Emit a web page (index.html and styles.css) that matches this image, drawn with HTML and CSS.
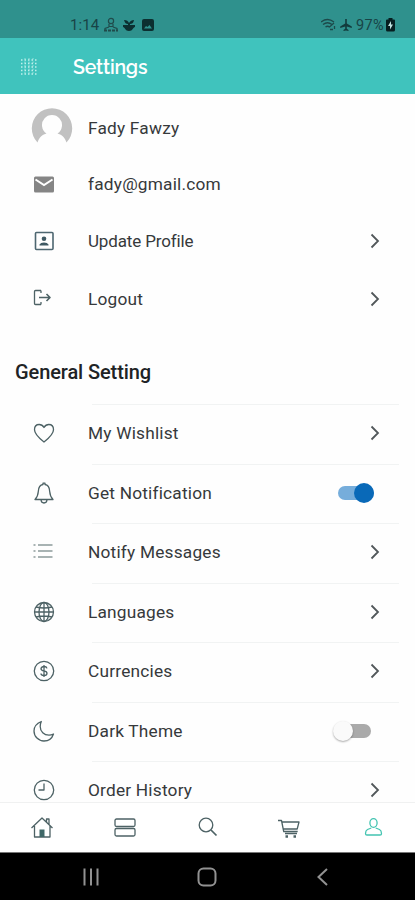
FILE: index.html
```html
<!DOCTYPE html>
<html lang="en">
<head>
<meta charset="utf-8">
<meta name="viewport" content="width=device-width, initial-scale=1">
<title>Settings</title>
<link rel="stylesheet" href="styles.css">
</head>
<body>
<div class="phone">
  <div class="status">
    <span class="time">1:14</span>
    <svg class="status-left" width="54" height="16" viewBox="0 0 54 16">
      <g fill="none" stroke="#204b4b" stroke-width="1.2"><circle cx="8" cy="4" r="2.6"/><path d="M6 7v2.500h4V7M2 13.500v-2l4-1.500M10 10l4 1.500v2"/><path d="M1 13.500h14" stroke-width="2" stroke-dasharray="3 1"/></g>
      <g fill="#0c2f30"><path d="M21 3c3 0 4 1 5 3 1-2 3-3 5-3-.5 3-2 4-4 4v1h5v2c-2 0-2 4-6 4s-4-4-6-4V8h5V7c-2 0-3-1-4-4z"/><path fill-rule="evenodd" d="M41 2h8q2 0 2 2v8q0 2-2 2h-8q-2 0-2-2V4q0-2 2-2zm0 9.500h8L46.500 8l-2 2-1.500-1z"/></g>
    </svg>
    <span class="grow"></span>
    <svg width="34" height="16" viewBox="0 0 34 16">
      <g fill="none" stroke="#1d494a" stroke-width="1.300"><path d="M0 5q6.500-5 13 0M2 7.500q4.500-3.500 9 0M4.500 10q2-1.500 4 0L13 6"/><path d="M9 12.500h3M13.500 9v3"/></g>
      <path fill="#123b3c" d="M24.200 2h1.600v4.500l5 3v1.500l-5-1.500v2.300l1.700 1.300v1l-2.500-.6-2.500.6v-1l1.700-1.300V9.500l-5 1.500V9.500l5-3z"/>
    </svg>
    <span class="percent">97%</span>
    <svg class="battery" width="9" height="14" viewBox="0 0 9 14"><path fill="#061e20" d="M2.500 0h4v1.500H8q1 0 1 1V12q0 1.500-1.500 1.500h-6Q0 13.500 0 12V2.500q0-1 1-1h1.500z"/><path fill="#bfe0de" d="M5 3 2 8h2v3.500L7 6.500H5z"/></svg>
  </div>
  <header class="appbar">
    <svg width="18" height="20" viewBox="0 0 18 20" fill="none" stroke="#e9fffc" stroke-width="1.700" stroke-dasharray="1.500 2"><path d="M1 3h16M1 6.500h16M1 10h16M1 13.500h16M1 17h16" opacity=".75"/><path d="M5 1v17M9 1v17M13 1v17" stroke-width="1" opacity=".5"/></svg>
    <h1>Settings</h1>
  </header>
  <main class="content">
    <section class="account">
      <div class="row avatar-row"><svg class="icon" width="42" height="42" viewBox="0 0 42 42"><path fill="#c1c1c1" d="M6.500 35.500A20.200 20.200 0 1 1 35.500 35.500C34 30 30 27.300 26.500 26.400A10 10 0 1 0 15.500 26.400C12 27.300 8 30 6.500 35.500z"/></svg><span>Fady Fawzy</span></div>
      <div class="row"><svg class="icon" width="24" height="24" viewBox="0 0 24 24"><rect x="2" y="4.500" width="20" height="16" rx="1.500" fill="#858585"/><path d="M3.500 7.500 12 13l8.500-5.500" fill="none" stroke="#fff" stroke-width="2"/></svg><span>fady@gmail.com</span></div>
      <div class="row"><svg class="icon" width="24" height="24" viewBox="0 0 24 24"><rect x="3.500" y="3.500" width="17.500" height="17" rx="1" fill="none" stroke="#4d6670" stroke-width="1.600"/><circle cx="12" cy="9.800" r="2.300" fill="#3f5963"/><path d="M7.500 16.500v-1q1-2 4.500-2t4.500 2v1z" fill="#3f5963"/></svg><span class="tight">Update Profile</span><svg class="chevron" viewBox="0 0 10 16"><path d="m1.500 1.500 6.500 6.500-6.500 6.500"/></svg></div>
      <div class="row"><svg class="icon line" width="24" height="24" viewBox="0 0 24 24"><path d="M9 3.500H3.500q-1 0-1 1v12q0 1 1 1H9M9 6v-2.500M9 15v2.500"/><path d="M7 10.500h10.500M14.500 7l3.500 3.500-3.500 3.500" stroke-width="1.600"/></svg><span>Logout</span><svg class="chevron" viewBox="0 0 10 16"><path d="m1.500 1.500 6.500 6.500-6.500 6.500"/></svg></div>
    </section>
    <h2>General Setting</h2>
    <section class="general">
      <div class="row"><svg class="icon line" width="24" height="24" viewBox="0 0 24 24"><path d="M12 21C7 17 2.500 13 2.500 8.700 2.500 5.500 4.500 3.500 7.200 3.500c2.100 0 3.700 1.100 4.800 3 1.100-1.900 2.700-3 4.800-3 2.700 0 4.700 2 4.700 5.200C21.500 13 17 17 12 21z"/></svg><span>My Wishlist</span><svg class="chevron" viewBox="0 0 10 16"><path d="m1.500 1.500 6.500 6.500-6.500 6.500"/></svg></div>
      <div class="row"><svg class="icon line" width="24" height="24" viewBox="0 0 24 24"><path d="M3 18.500c2-2 3-3.500 3.300-8C6.500 6.500 8 3.800 11 3.500V2.200h2v1.300c3 .3 4.500 3 4.700 7 .3 4.500 1.300 6 3.300 8zM9 19q.3 3 3 3t3-3"/></svg><span>Get Notification</span><i class="toggle on"></i></div>
      <div class="row"><svg class="icon line list" width="24" height="24" viewBox="0 0 24 24"><path d="M1.500 5h2M1.500 11h2M1.500 17h2M6 5h14.500M6 11h14.500M6 17h14.500"/></svg><span>Notify Messages</span><svg class="chevron" viewBox="0 0 10 16"><path d="m1.500 1.500 6.500 6.500-6.500 6.500"/></svg></div>
      <div class="row"><svg class="icon line" width="24" height="24" viewBox="0 0 24 24"><circle cx="12" cy="12" r="9.500"/><ellipse cx="12" cy="12" rx="5" ry="9.500"/><path d="M12 2.500v19M2.500 12h19M4 7q8 2 16 0M4 17q8-2 16 0"/></svg><span>Languages</span><svg class="chevron" viewBox="0 0 10 16"><path d="m1.500 1.500 6.500 6.500-6.500 6.500"/></svg></div>
      <div class="row"><svg class="icon line" width="24" height="24" viewBox="0 0 24 24"><circle cx="12" cy="12" r="9.700"/><path d="M15 9.300Q14.500 7.500 12 7.500T9 9.700q0 1.700 3 2.200t3 2.400q0 2.200-3 2.200t-3-2M12 6v12"/></svg><span>Currencies</span><svg class="chevron" viewBox="0 0 10 16"><path d="m1.500 1.500 6.500 6.500-6.500 6.500"/></svg></div>
      <div class="row"><svg class="icon line" width="24" height="24" viewBox="0 0 24 24"><path d="M9.300 2.500C4.500 4.500 2 8 2 12c0 5.500 4.500 10 10 10 4 0 8-2.500 9.500-7-2 1-3 1.100-4.500 1.100-5 0-8.800-3.600-8.800-8.600 0-2 .3-3.200 1.100-5z"/></svg><span>Dark Theme</span><i class="toggle off"></i></div>
      <div class="row"><svg class="icon line" width="24" height="24" viewBox="0 0 24 24"><circle cx="12" cy="12" r="9.700"/><path d="M12 5.500V12H6.500"/></svg><span>Order History</span><svg class="chevron" viewBox="0 0 10 16"><path d="m1.500 1.500 6.500 6.500-6.500 6.500"/></svg></div>
    </section>
  </main>
  <nav class="tabs">
    <svg class="line" width="24" height="24" viewBox="0 0 24 24"><path d="M1.500 12 12 2l10.500 10M4.500 10v11h15.500V10M16.500 6V3h2.500v5.300"/><path d="M9.500 13.500h5V21h-5z" fill="#3f6868" stroke="none"/></svg>
    <svg class="line" width="24" height="24" viewBox="0 0 24 24"><rect x="2" y="3" width="20" height="7.500" rx="1.500"/><rect x="2" y="12.500" width="20" height="7.500" rx="1.500"/></svg>
    <svg class="line" width="24" height="24" viewBox="0 0 24 24"><circle cx="10" cy="9" r="6.800"/><path d="m15 14 5.500 5.500" stroke-width="1.700"/></svg>
    <svg class="line" width="28" height="24" viewBox="0 0 28 24"><path d="M1 4.500h3.500l2.200 11h14M5 6h17l-1.800 7H6.500M8 17.500h12"/><path d="M8.500 20.500H11M16.500 20.500H19" stroke-width="2.300"/></svg>
    <svg class="line active" width="24" height="24" viewBox="0 0 24 24"><ellipse cx="11.500" cy="7" rx="3.600" ry="4.300"/><path d="M9.300 12 5.500 13.500q-2 1-2 4.200 0 1.300 1.500 1.300h13q1.500 0 1.500-1.300 0-3.200-2-4.200L13.700 12"/></svg>
  </nav>
  <div class="system">
    <svg width="20" height="20" viewBox="0 0 20 20"><path d="M3.500 1.500v17M10 1.500v17M16.500 1.500v17"/></svg>
    <svg width="20" height="20" viewBox="0 0 20 20"><rect x="1.500" y="1.500" width="17" height="17" rx="5"/></svg>
    <svg width="20" height="20" viewBox="0 0 20 20"><path d="m14 2-8.500 8 8.500 8"/></svg>
  </div>
</div>
</body>
</html>
```
FILE: styles.css
```css
* { box-sizing: border-box; }
body { margin: 0; background: #fff; font-family: Roboto, "Liberation Sans", sans-serif; color: #36393b; }
svg { display: block; flex: none; }
.phone { width: 415px; height: 900px; display: flex; flex-direction: column; overflow: hidden; }
.status { height: 38px; flex: none; background: #2f918d; display: flex; align-items: center; padding: 11px 20px 0 70px; color: #184446; }
.time { width: 33px; font-size: 15px; letter-spacing: .1px; }
.grow { flex: 1; }
.percent { margin-left: 1px; padding-top: 1px; width: 30px; font-size: 14.500px; letter-spacing: .3px; }
.appbar { height: 56px; flex: none; background: #40c3bd; display: flex; align-items: center; padding: 2px 0 0 20px; }
.appbar h1 { margin: 2px 0 0 35px; font-family: Raleway, Lato, sans-serif; font-size: 19.500px; line-height: 24px; font-weight: 600; letter-spacing: -.2px; color: #fff; }
.content { flex: 1; min-height: 0; overflow: hidden; background: #fefefe; }
.row { display: grid; grid-template-columns: 88px 1fr auto; align-items: center; padding-right: 35px; font-size: 17.300px; line-height: 24px; white-space: nowrap; letter-spacing: .2px; }
.tight { font-size: 17px; letter-spacing: -.15px; }
.icon { justify-self: center; }
.line { fill: none; stroke: #4d6265; stroke-width: 1.300; stroke-linejoin: round; }
.list { stroke: #8c9a9b; }
.chevron { width: 10px; height: 16px; fill: none; stroke: #51575a; stroke-width: 1.800; }
.account { padding-top: 5px; }
.account .row { height: 58px; }
.account .avatar-row { height: 57px; }
.account .row:nth-child(2) { height: 56px; }
.avatar-row .icon { margin-left: 15px; }
h2 { margin: 32px 0 20px 15px; font-size: 20px; line-height: 24px; font-weight: 500; letter-spacing: -.1px; color: #202325; }
.general .row { height: 59.500px; padding-bottom: 1px; background: linear-gradient(#f1f3f3, #f1f3f3) 92px 0 / 307px 1px no-repeat; }
.toggle { display: block; height: 14px; border-radius: 7px; position: relative; }
.toggle.on { width: 36px; background: #76addb; margin-right: 6px; }
.toggle.off { width: 34px; background: #aaa; margin-right: 9px; }
.toggle::after { content: ""; position: absolute; top: -3px; width: 20px; height: 20px; border-radius: 50%; }
.toggle.on::after { right: 0; background: #0969b8; }
.toggle.off::after { left: -4px; background: #fafafa; box-shadow: 0 1px 2px #0005; }
.tabs { height: 50px; flex: none; background: #fff; border-top: 1px solid #f0f1f1; display: grid; grid-template-columns: repeat(5, 1fr); justify-items: center; align-items: center; }
.tabs .active { stroke: #43c4b1; }
.system { height: 48px; flex: none; background: #000; border-top: 1px solid #777; display: grid; grid-template-columns: repeat(3, 116px); justify-content: center; justify-items: center; align-items: center; padding-right: 2px; }
.system svg { fill: none; stroke: #929292; stroke-width: 2; }
```
